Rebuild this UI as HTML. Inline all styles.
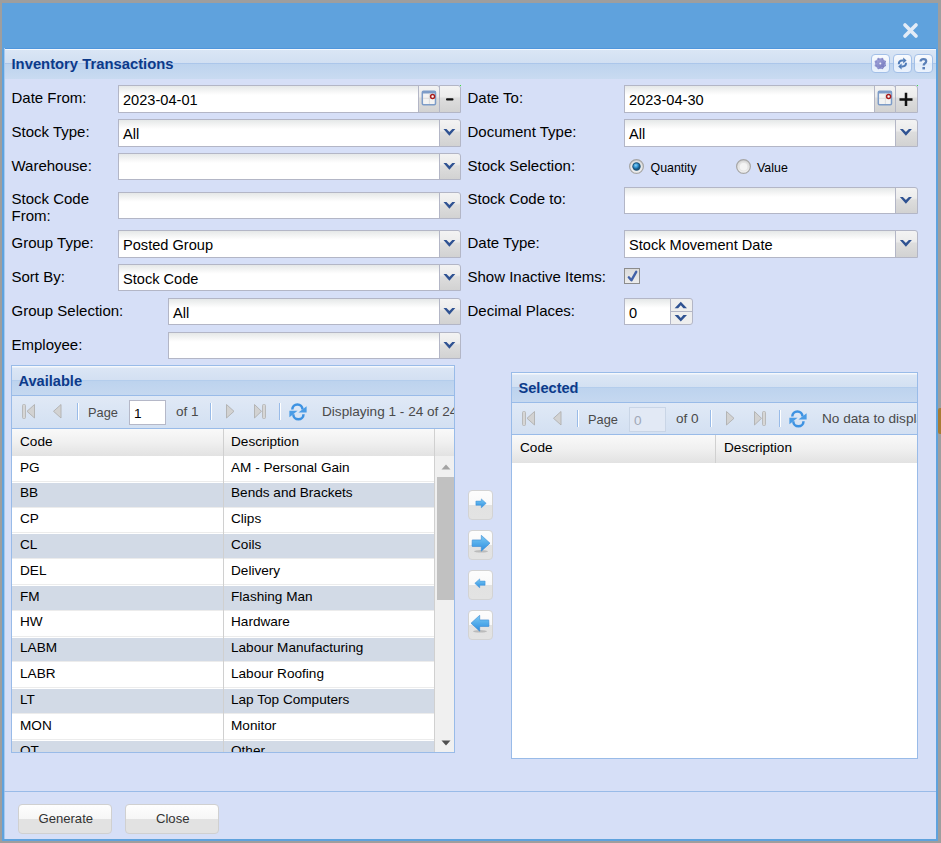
<!DOCTYPE html>
<html><head><meta charset="utf-8">
<style>
*{box-sizing:border-box;margin:0;padding:0}
html,body{width:941px;height:843px;overflow:hidden;background:#9e9e9e;font-family:"Liberation Sans",sans-serif;}
svg{position:absolute;overflow:visible}
#win{position:absolute;left:2px;top:3px;width:936px;height:838px;background:#5fa2dd}
#panel{position:absolute;left:4px;top:48px;width:932px;height:791px;background:#d6dff7}
#hdr{position:absolute;left:4px;top:48px;width:932px;height:31px;
 background:linear-gradient(#4f96dc 0px,#4f96dc 1px,#f4f8fd 1px,#f4f8fd 2px,#dae6f5 2px,#d1dff2 15px,#abc6ea 15px,#abc6ea 16px,#bdd3ee 16px,#c9dbf1 31px);}
#title{position:absolute;left:11.5px;top:56px;font-weight:bold;font-size:14.8px;color:#0c3a8a;line-height:17px}
.tool{position:absolute;top:54px;width:19px;height:19px;border:1px solid #a3c0e8;border-radius:4px;
 background:linear-gradient(#f9fbfe,#edf3fb 50%,#e1ecfa 50%,#ebf3fd)}
.lbl{position:absolute;font-size:15px;color:#000;line-height:17px;white-space:nowrap}
.fld{position:absolute;height:28px;border:1px solid #b3b6c6;background:linear-gradient(#e5e8e8,#fafafa 7px,#fff 9px)}
.fld .v{position:absolute;left:4px;top:5.5px;font-size:14.6px;line-height:17px;white-space:nowrap}
.trg{position:absolute;top:-1px;height:calc(100% + 2px);width:22px;border:1px solid #b3b6c6;border-radius:0 3px 0 0;
 background:linear-gradient(#f3f3f3,#ececec 40%,#dddddd 48%,#d2d2d2)}
.trg svg{left:0;top:0}
.grid{position:absolute;border:1px solid #99bbe8;background:#fff;overflow:hidden}
.ghdr{position:absolute;left:0;top:0;right:0;height:30px;border-bottom:1px solid #99bbe8;
 background:linear-gradient(#f5f8fc 0px,#f5f8fc 1px,#dbe6f5 2px,#d3e0f2 14px,#b4cdec 14px,#b4cdec 15px,#bdd3ee 15px,#c5d8f0 29px)}
.gtitle{position:absolute;left:6.5px;top:7px;font-weight:bold;font-size:14.6px;color:#0c3a8a;line-height:17px}
.tbar{position:absolute;left:0;right:0;height:33px;border-bottom:1px solid #99bbe8;
 background:linear-gradient(#e0e9f6,#d3e0f2)}
.ttxt{position:absolute;top:8px;font-size:13.6px;color:#4a4a4a;line-height:16px;white-space:nowrap}
.pin{position:absolute;top:4px;width:37px;height:25px;border:1px solid #b5b8c8;background:#fff}
.pin span{position:absolute;left:4px;top:5px;font-size:13.6px;line-height:16px;color:#000}
.sep{position:absolute;top:7px;width:2px;height:17px;border-left:1px solid #99bbe8;border-right:1px solid #fff}
.colh{position:absolute;left:0;right:0;height:27px;background:linear-gradient(#f9f9f9,#f0f0f0 50%,#e2e2e2)}
.colh span{position:absolute;top:5px;font-size:13.6px;line-height:16px;color:#000}
.cdiv{position:absolute;top:0;width:1px;height:100%;background:#d0d0d0}
.body{position:absolute;left:0;right:0;bottom:0}
.row{position:absolute;left:0;width:423px;height:25.8px;border-top:1px solid #fff;border-bottom:1px solid #ececec;background:#fff}
.row.alt{background:#d2dae6}
.row span{position:absolute;top:2.5px;font-size:13.6px;line-height:16px;color:#000;white-space:nowrap}
.row .c1{left:8px}.row .c2{left:219px}
.abtn{position:absolute;left:468px;width:25px;height:30px;border:1px solid #d3d3d3;border-radius:4px;
 background:linear-gradient(#fdfdfd,#f9f9f9 50%,#e2e2e2 50%,#e3e3e3)}
.btn{position:absolute;top:804px;height:30px;width:94px;border:1px solid #d0d0d0;border-radius:4px;
 background:linear-gradient(#fefefe,#f6f6f6 50%,#e2e2e2 50%,#e2e2e2)}
.btn span{position:absolute;left:1.5px;right:0;top:6px;text-align:center;font-size:13.1px;line-height:16px;color:#333}
</style></head><body>
<div style="position:absolute;left:938px;top:408px;width:3px;height:26px;background:#a87b34;border-radius:2px 0 0 2px"></div>
<div id="win"></div>
<svg style="left:903px;top:23px" width="15" height="15" viewBox="0 0 15 15"><path d="M2 2L13 13M13 2L2 13" stroke="#e3ecf7" stroke-width="3.7" stroke-linecap="round"/></svg>
<div id="panel"></div><div id="hdr"></div><div style="position:absolute;left:4px;top:48px;width:1px;height:791px;background:#a6c8ee"></div><div id="title">Inventory Transactions</div>
<div class="tool" style="left:871px"></div><div class="tool" style="left:893px"></div><div class="tool" style="left:914px"></div>
<svg style="left:871px;top:54px" width="19" height="19" viewBox="0 0 19 19">
 <defs><linearGradient id="gg" x1="0" y1="0" x2="1" y2="1"><stop offset="0" stop-color="#a9acdf"/><stop offset="1" stop-color="#6d72b8"/></linearGradient></defs>
 <g fill="url(#gg)"><circle cx="9.3" cy="9.5" r="5.3"/><circle cx="13.94" cy="11.37" r="1.15"/><circle cx="11.25" cy="14.10" r="1.15"/><circle cx="7.43" cy="14.14" r="1.15"/><circle cx="4.70" cy="11.45" r="1.15"/><circle cx="4.66" cy="7.63" r="1.15"/><circle cx="7.35" cy="4.90" r="1.15"/><circle cx="11.17" cy="4.86" r="1.15"/><circle cx="13.90" cy="7.55" r="1.15"/></g>
 <circle cx="9.3" cy="9.5" r="1.0" fill="#eef0fa"/></svg>
<svg style="left:893px;top:54px" width="19" height="19" viewBox="0 0 19 19">
 <g fill="none" stroke="#4f7cb8" stroke-width="2"><path d="M5.8 10.2 Q5.8 6.6 9.3 6.6H10.5"/><path d="M13 8.8 Q13 12.4 9.5 12.4H8.3"/></g>
 <path d="M10.2 3.6L13.6 6.6L10.2 9.6Z" fill="#4f7cb8"/><path d="M8.6 9.4L5.2 12.4L8.6 15.4Z" fill="#4f7cb8"/></svg>
<svg style="left:914px;top:54px" width="19" height="19" viewBox="0 0 19 19">
 <path d="M6.6 7.6 Q6.6 5.1 9.5 5.1 Q12.2 5.1 12.2 7.3 Q12.2 8.6 10.8 9.4 Q9.7 10 9.7 11.6" fill="none" stroke="#5b80b8" stroke-width="2.3"/>
 <rect x="8.4" y="13" width="2.6" height="2.4" fill="#5b80b8"/></svg>
<div class="lbl" style="left:11.5px;top:88.5px">Date From:</div>
<div class="lbl" style="left:11.5px;top:122.5px">Stock Type:</div>
<div class="lbl" style="left:11.5px;top:156.5px">Warehouse:</div>
<div class="lbl" style="left:11.5px;top:191.0px"><span style="line-height:16.5px;display:block">Stock Code<br>From:</span></div>
<div class="lbl" style="left:11.5px;top:233.5px">Group Type:</div>
<div class="lbl" style="left:11.5px;top:267.5px">Sort By:</div>
<div class="lbl" style="left:11.5px;top:301.5px">Group Selection:</div>
<div class="lbl" style="left:11.5px;top:335.5px">Employee:</div>
<div class="lbl" style="left:467.5px;top:88.5px">Date To:</div>
<div class="lbl" style="left:467.5px;top:122.5px">Document Type:</div>
<div class="lbl" style="left:467.5px;top:156.5px">Stock Selection:</div>
<div class="lbl" style="left:467.5px;top:189.5px">Stock Code to:</div>
<div class="lbl" style="left:467.5px;top:233.5px">Date Type:</div>
<div class="lbl" style="left:467.5px;top:267.5px">Show Inactive Items:</div>
<div class="lbl" style="left:467.5px;top:301.5px">Decimal Places:</div>
<div class="fld" style="left:118px;top:85px;width:301px;height:28px"><span class="v">2023-04-01</span><div class="trg" style="left:299px;width:22px"><svg style="left:2px;top:4px" width="16" height="16" viewBox="0 0 16 16"><rect x="1.3" y="1.3" width="13.2" height="13.4" rx="1.2" fill="#f3f3f3" stroke="#7d9cc8" stroke-width="1.5"/><rect x="1" y="1" width="13.8" height="2.4" rx="1" fill="#7d9cc8"/><g stroke="#dadada" stroke-width="0.9"><path d="M8.4 3.4V14M2 8.3H14"/></g><circle cx="11.6" cy="6.4" r="2" fill="#fbfbfb" stroke="#a81c1c" stroke-width="1.5"/></svg></div><div class="trg" style="left:320px;width:22px"><svg style="left:0;top:0" width="20" height="26" viewBox="0 0 20 26"><rect x="6" y="12.2" width="7.5" height="2.2" rx="1" fill="#111"/></svg></div></div>
<div class="fld" style="left:118px;top:119px;width:322px;height:28px"><span class="v">All</span><div class="trg" style="left:320px;width:22px"><svg style="left:0;top:0" width="20" height="26" viewBox="0 0 20 26"><path d="M3.5 8.9H6.5L9.4 12L12.3 8.9H15.3L9.4 15.8Z" fill="#2f5292"/></svg></div></div>
<div class="fld" style="left:118px;top:153px;width:322px;height:27px"><div class="trg" style="left:320px;width:22px"><svg style="left:0;top:0" width="20" height="26" viewBox="0 0 20 26"><path d="M3.5 8.9H6.5L9.4 12L12.3 8.9H15.3L9.4 15.8Z" fill="#2f5292"/></svg></div></div>
<div class="fld" style="left:118px;top:192px;width:322px;height:27px"><div class="trg" style="left:320px;width:22px"><svg style="left:0;top:0" width="20" height="26" viewBox="0 0 20 26"><path d="M3.5 8.9H6.5L9.4 12L12.3 8.9H15.3L9.4 15.8Z" fill="#2f5292"/></svg></div></div>
<div class="fld" style="left:118px;top:230px;width:322px;height:28px"><span class="v">Posted Group</span><div class="trg" style="left:320px;width:22px"><svg style="left:0;top:0" width="20" height="26" viewBox="0 0 20 26"><path d="M3.5 8.9H6.5L9.4 12L12.3 8.9H15.3L9.4 15.8Z" fill="#2f5292"/></svg></div></div>
<div class="fld" style="left:118px;top:264px;width:322px;height:27px"><span class="v">Stock Code</span><div class="trg" style="left:320px;width:22px"><svg style="left:0;top:0" width="20" height="26" viewBox="0 0 20 26"><path d="M3.5 8.9H6.5L9.4 12L12.3 8.9H15.3L9.4 15.8Z" fill="#2f5292"/></svg></div></div>
<div class="fld" style="left:168px;top:298px;width:272px;height:27px"><span class="v">All</span><div class="trg" style="left:270px;width:22px"><svg style="left:0;top:0" width="20" height="26" viewBox="0 0 20 26"><path d="M3.5 8.9H6.5L9.4 12L12.3 8.9H15.3L9.4 15.8Z" fill="#2f5292"/></svg></div></div>
<div class="fld" style="left:168px;top:332px;width:272px;height:27px"><div class="trg" style="left:270px;width:22px"><svg style="left:0;top:0" width="20" height="26" viewBox="0 0 20 26"><path d="M3.5 8.9H6.5L9.4 12L12.3 8.9H15.3L9.4 15.8Z" fill="#2f5292"/></svg></div></div>
<div class="fld" style="left:624px;top:85px;width:251px;height:28px"><span class="v">2023-04-30</span><div class="trg" style="left:249px;width:22px"><svg style="left:2px;top:4px" width="16" height="16" viewBox="0 0 16 16"><rect x="1.3" y="1.3" width="13.2" height="13.4" rx="1.2" fill="#f3f3f3" stroke="#7d9cc8" stroke-width="1.5"/><rect x="1" y="1" width="13.8" height="2.4" rx="1" fill="#7d9cc8"/><g stroke="#dadada" stroke-width="0.9"><path d="M8.4 3.4V14M2 8.3H14"/></g><circle cx="11.6" cy="6.4" r="2" fill="#fbfbfb" stroke="#a81c1c" stroke-width="1.5"/></svg></div><div class="trg" style="left:270px;width:23px"><svg style="left:0;top:0" width="20" height="26" viewBox="0 0 20 26"><path d="M3.5 13.4H16.5M10 6.8V20" stroke="#111" stroke-width="2.5"/></svg></div></div>
<div class="fld" style="left:624px;top:119px;width:272px;height:28px"><span class="v">All</span><div class="trg" style="left:270px;width:23px"><svg style="left:0;top:0" width="21" height="26" viewBox="0 0 21 26"><path d="M3.9 8.9H6.9L9.9 12L12.9 8.9H15.9L9.9 15.8Z" fill="#2f5292"/></svg></div></div>
<div class="fld" style="left:624px;top:187px;width:272px;height:27px"><div class="trg" style="left:270px;width:23px"><svg style="left:0;top:0" width="21" height="26" viewBox="0 0 21 26"><path d="M3.9 8.9H6.9L9.9 12L12.9 8.9H15.9L9.9 15.8Z" fill="#2f5292"/></svg></div></div>
<div class="fld" style="left:624px;top:230px;width:272px;height:28px"><span class="v">Stock Movement Date</span><div class="trg" style="left:270px;width:23px"><svg style="left:0;top:0" width="21" height="26" viewBox="0 0 21 26"><path d="M3.9 8.9H6.9L9.9 12L12.9 8.9H15.9L9.9 15.8Z" fill="#2f5292"/></svg></div></div>
<div class="fld" style="left:624px;top:298px;width:47px;height:27px"><span class="v">0</span></div>
<div style="position:absolute;left:670px;top:298px;width:23px;height:27px;border:1px solid #b3b6c6;border-radius:0 3px 3px 0;background:#eeeeee">
 <div style="position:absolute;left:0;right:0;top:12px;height:1px;background:#b3b6c6"></div>
 <svg style="left:0;top:0" width="21" height="25" viewBox="0 0 21 25"><path d="M3.6 9.2H7.2L9.8 6.2L12.4 9.2H16L9.8 2.8Z" fill="#2f5292"/><path d="M3.6 16.1H7.2L9.8 19.1L12.4 16.1H16L9.8 22.5Z" fill="#2f5292"/></svg>
</div>
<svg style="left:629px;top:159px" width="15" height="15" viewBox="0 0 15 15">
 <defs><linearGradient id="rg" x1="0" y1="0" x2="0" y2="1"><stop offset="0" stop-color="#d2d2d2"/><stop offset="1" stop-color="#f2f2f2"/></linearGradient><radialGradient id="rb" cx="0.4" cy="0.35" r="0.6"><stop offset="0" stop-color="#8fd3f5"/><stop offset="0.6" stop-color="#2f93d2"/><stop offset="1" stop-color="#1b5a86"/></radialGradient></defs>
 <circle cx="7.5" cy="7.5" r="6.9" fill="url(#rg)" stroke="#a6a6a6" stroke-width="1.2"/><circle cx="7.5" cy="7.5" r="5.2" fill="#ececec"/>
 <circle cx="7.5" cy="7.5" r="4.2" fill="#1e5478"/><circle cx="7.4" cy="7.3" r="3.1" fill="url(#rb)"/></svg>
<div class="lbl" style="left:650.5px;top:159.5px;font-size:12.4px">Quantity</div>
<svg style="left:736px;top:159px" width="15" height="15" viewBox="0 0 15 15">
 <circle cx="7.5" cy="7.5" r="6.9" fill="url(#rg)" stroke="#a6a6a6" stroke-width="1.2"/><circle cx="7.5" cy="7.5" r="5" fill="#e4e4e4"/><circle cx="7.6" cy="7.8" r="3.8" fill="#f4f4f4"/></svg>
<div class="lbl" style="left:757px;top:159.5px;font-size:12.4px">Value</div>
<div style="position:absolute;left:624px;top:268px;width:16px;height:16px;border:1px solid #8c8c8c;background:linear-gradient(#dcdcdc,#ececec)"></div>
<svg style="left:624px;top:268px" width="16" height="16" viewBox="0 0 16 16"><path d="M4.8 9.3L7.4 12.3L12.2 3.8" fill="none" stroke="#4161a8" stroke-width="2.4" stroke-linecap="round" stroke-linejoin="round"/></svg>
<div class="grid" style="left:11px;top:365px;width:444px;height:388px">
 <div class="ghdr"><span class="gtitle">Available</span></div>
 <div class="tbar" style="top:30px"><svg style="left:10px;top:8px" width="13" height="15" viewBox="0 0 13 15"><rect x="0.5" y="0.5" width="3" height="14" rx="1" fill="#d6d6d6" stroke="#b4b4b4" stroke-width="0.9"/><path d="M12.5 0.5V14L5 7.3Z" fill="#d2d2d2" stroke="#b0b0b0" stroke-width="0.9" stroke-linejoin="round"/></svg><svg style="left:41px;top:8px" width="9" height="15" viewBox="0 0 9 15"><path d="M8 0.5V14L0.5 7.3Z" fill="#d2d2d2" stroke="#b0b0b0" stroke-width="0.9" stroke-linejoin="round"/></svg><div class="sep" style="left:65px"></div><span class="ttxt" style="left:76px;font-size:12.8px;top:8.5px">Page</span><div class="pin" style="left:117px;"><span style="">1</span></div><span class="ttxt" style="left:164px">of 1</span><div class="sep" style="left:198px"></div><svg style="left:214px;top:8px" width="9" height="15" viewBox="0 0 9 15"><path d="M0.5 0.5V14L8 7.3Z" fill="#d2d2d2" stroke="#b0b0b0" stroke-width="0.9" stroke-linejoin="round"/></svg><svg style="left:242px;top:8px" width="13" height="15" viewBox="0 0 13 15"><path d="M0.5 0.5V14L7.5 7.3Z" fill="#d2d2d2" stroke="#b0b0b0" stroke-width="0.9" stroke-linejoin="round"/><rect x="8.5" y="0.5" width="3" height="14" rx="1" fill="#d6d6d6" stroke="#b4b4b4" stroke-width="0.9"/></svg><div class="sep" style="left:267px"></div><svg style="left:277px;top:7px" width="19" height="18" viewBox="0 0 19 18"><g fill="none" stroke="#3d92e2" stroke-width="2.5"><path d="M3.3 6.6A5.1 5.1 0 0 1 13.5 6.6"/><path d="M14.5 11.2A5.1 5.1 0 0 1 4.3 11.2"/></g><path d="M17.6 3.2V9.6H9.4Z" fill="#4a9ce6"/><path d="M0.4 14.2V7.8H8.6Z" fill="#4a9ce6"/></svg><span class="ttxt" style="left:310px">Displaying 1 - 24 of 24</span></div>
 <div class="colh" style="top:63px"><span style="left:8px">Code</span><span style="left:219px">Description</span>
  <div class="cdiv" style="left:211px"></div><div class="cdiv" style="left:422px"></div></div>
 <div class="body" style="top:90px">
<div class="row" style="top:0.00px"><span class="c1">PG</span><span class="c2">AM - Personal Gain</span></div>
<div class="row alt" style="top:25.80px"><span class="c1">BB</span><span class="c2">Bends and Brackets</span></div>
<div class="row" style="top:51.60px"><span class="c1">CP</span><span class="c2">Clips</span></div>
<div class="row alt" style="top:77.40px"><span class="c1">CL</span><span class="c2">Coils</span></div>
<div class="row" style="top:103.20px"><span class="c1">DEL</span><span class="c2">Delivery</span></div>
<div class="row alt" style="top:129.00px"><span class="c1">FM</span><span class="c2">Flashing Man</span></div>
<div class="row" style="top:154.80px"><span class="c1">HW</span><span class="c2">Hardware</span></div>
<div class="row alt" style="top:180.60px"><span class="c1">LABM</span><span class="c2">Labour Manufacturing</span></div>
<div class="row" style="top:206.40px"><span class="c1">LABR</span><span class="c2">Labour Roofing</span></div>
<div class="row alt" style="top:232.20px"><span class="c1">LT</span><span class="c2">Lap Top Computers</span></div>
<div class="row" style="top:258.00px"><span class="c1">MON</span><span class="c2">Monitor</span></div>
<div class="row alt" style="top:283.80px"><span class="c1">OT</span><span class="c2">Other</span></div>
  <div class="cdiv" style="left:211px;height:300px"></div><div class="cdiv" style="left:422px;height:300px"></div>
  <div style="position:absolute;left:423px;top:0;width:19px;height:300px;background:#f0f0f0"></div>
  <div style="position:absolute;left:425px;top:21px;width:17px;height:123px;background:#c1c1c1"></div>
  <svg style="left:428.5px;top:8px" width="10" height="6" viewBox="0 0 10 6"><path d="M0.5 5.5L5 0.5L9.5 5.5Z" fill="#a3a3a3"/></svg>
  <svg style="left:428.5px;top:284px" width="10" height="6" viewBox="0 0 10 6"><path d="M0.5 0.5L5 5.5L9.5 0.5Z" fill="#505050"/></svg>
 </div>
</div>
<div class="grid" style="left:511px;top:372px;width:407px;height:387px">
 <div class="ghdr"><span class="gtitle">Selected</span></div>
 <div class="tbar" style="top:30px;height:32px"><svg style="left:10px;top:8px" width="13" height="15" viewBox="0 0 13 15"><rect x="0.5" y="0.5" width="3" height="14" rx="1" fill="#d6d6d6" stroke="#b4b4b4" stroke-width="0.9"/><path d="M12.5 0.5V14L5 7.3Z" fill="#d2d2d2" stroke="#b0b0b0" stroke-width="0.9" stroke-linejoin="round"/></svg><svg style="left:41px;top:8px" width="9" height="15" viewBox="0 0 9 15"><path d="M8 0.5V14L0.5 7.3Z" fill="#d2d2d2" stroke="#b0b0b0" stroke-width="0.9" stroke-linejoin="round"/></svg><div class="sep" style="left:65px"></div><span class="ttxt" style="left:76px;font-size:12.8px;top:8.5px">Page</span><div class="pin" style="left:117px;background:#e2e9f5;border-color:#c9d5e6"><span style="color:#a0a8b8">0</span></div><span class="ttxt" style="left:164px">of 0</span><div class="sep" style="left:198px"></div><svg style="left:214px;top:8px" width="9" height="15" viewBox="0 0 9 15"><path d="M0.5 0.5V14L8 7.3Z" fill="#d2d2d2" stroke="#b0b0b0" stroke-width="0.9" stroke-linejoin="round"/></svg><svg style="left:242px;top:8px" width="13" height="15" viewBox="0 0 13 15"><path d="M0.5 0.5V14L7.5 7.3Z" fill="#d2d2d2" stroke="#b0b0b0" stroke-width="0.9" stroke-linejoin="round"/><rect x="8.5" y="0.5" width="3" height="14" rx="1" fill="#d6d6d6" stroke="#b4b4b4" stroke-width="0.9"/></svg><div class="sep" style="left:267px"></div><svg style="left:277px;top:7px" width="19" height="18" viewBox="0 0 19 18"><g fill="none" stroke="#3d92e2" stroke-width="2.5"><path d="M3.3 6.6A5.1 5.1 0 0 1 13.5 6.6"/><path d="M14.5 11.2A5.1 5.1 0 0 1 4.3 11.2"/></g><path d="M17.6 3.2V9.6H9.4Z" fill="#4a9ce6"/><path d="M0.4 14.2V7.8H8.6Z" fill="#4a9ce6"/></svg><span class="ttxt" style="left:310px">No data to display</span></div>
 <div class="colh" style="top:62px;height:28px"><span style="left:8px">Code</span><span style="left:212px">Description</span>
  <div class="cdiv" style="left:203px"></div></div>
</div>
<div class="abtn" style="top:490px"><svg style="left:0;top:0" width="23" height="27" viewBox="0 0 23 27"><defs><linearGradient id="ag" x1="0" y1="0" x2="0" y2="1"><stop offset="0" stop-color="#7ccbf5"/><stop offset="1" stop-color="#2b8de0"/></linearGradient></defs><g><path d="M6.9 10.1H12.3V7.9L17.2 12.3L12.3 16.8V14.3H6.9Z" fill="url(#ag)" stroke="#3b8ad4" stroke-width="0.5"/></g></svg></div>
<div class="abtn" style="top:530px"><svg style="left:0;top:0" width="23" height="27" viewBox="0 0 23 27"><defs><linearGradient id="ag" x1="0" y1="0" x2="0" y2="1"><stop offset="0" stop-color="#7ccbf5"/><stop offset="1" stop-color="#2b8de0"/></linearGradient></defs><g><ellipse cx="12" cy="20.3" rx="7" ry="1.3" fill="#9a9a9a" opacity="0.55"/><path d="M3.2 9.2Q3 8.9 3.5 8.9H12.3V4.3L21 12.2L12.3 20.2V15.5H3.5Q3 15.5 3 15Z" fill="url(#ag)" stroke="#3b8ad4" stroke-width="0.6"/></g></svg></div>
<div class="abtn" style="top:570px"><svg style="left:0;top:0" width="23" height="27" viewBox="0 0 23 27"><defs><linearGradient id="ag" x1="0" y1="0" x2="0" y2="1"><stop offset="0" stop-color="#7ccbf5"/><stop offset="1" stop-color="#2b8de0"/></linearGradient></defs><g transform="translate(23 0) scale(-1 1)"><path d="M6.9 10.1H12.3V7.9L17.2 12.3L12.3 16.8V14.3H6.9Z" fill="url(#ag)" stroke="#3b8ad4" stroke-width="0.5"/></g></svg></div>
<div class="abtn" style="top:610px"><svg style="left:0;top:0" width="23" height="27" viewBox="0 0 23 27"><defs><linearGradient id="ag" x1="0" y1="0" x2="0" y2="1"><stop offset="0" stop-color="#7ccbf5"/><stop offset="1" stop-color="#2b8de0"/></linearGradient></defs><g transform="translate(23 0) scale(-1 1)"><ellipse cx="12" cy="20.3" rx="7" ry="1.3" fill="#9a9a9a" opacity="0.55"/><path d="M3.2 9.2Q3 8.9 3.5 8.9H12.3V4.3L21 12.2L12.3 20.2V15.5H3.5Q3 15.5 3 15Z" fill="url(#ag)" stroke="#3b8ad4" stroke-width="0.6"/></g></svg></div>
<div style="position:absolute;left:4px;top:791px;width:932px;height:1px;background:#99bbe8"></div>
<div style="position:absolute;left:460px;top:85px;width:1px;height:1px;background:#3fe03f"></div><div style="position:absolute;left:917px;top:85px;width:1px;height:1px;background:#3fe03f"></div>
<div class="btn" style="left:18px"><span>Generate</span></div><div class="btn" style="left:125px"><span>Close</span></div>
</body></html>
